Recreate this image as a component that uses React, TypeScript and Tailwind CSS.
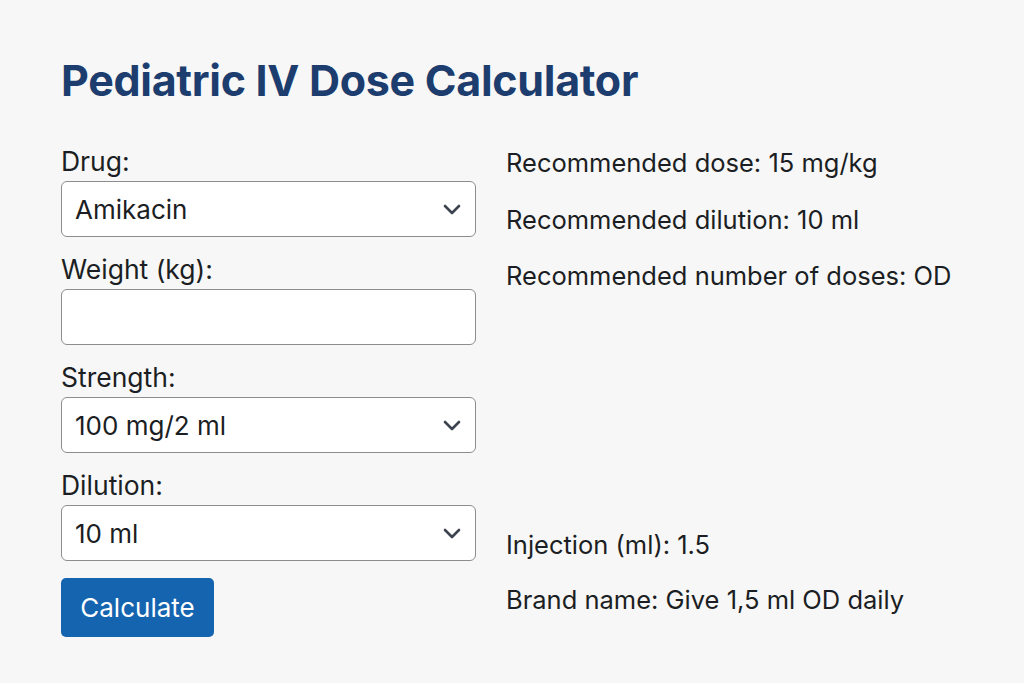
import React from "react";

function Chevron() {
  return (
    <svg width="18" height="11" viewBox="0 0 18 11" className="shrink-0" fill="none">
      <path d="M2 2l7 7 7-7" stroke="#3d4450" strokeWidth="2.6" strokeLinecap="round" strokeLinejoin="round" />
    </svg>
  );
}

function SelectBox({ value }: { value: string }) {
  return (
    <div className="h-[56px] bg-white border border-[#8d8d8d] rounded-[6px] flex items-center justify-between pl-[13px] pr-[14px]">
      <span className="text-[26px] text-[#1b1e23]">{value}</span>
      <Chevron />
    </div>
  );
}

function Label({ children }: { children: React.ReactNode }) {
  return <div className="h-[28px] leading-[28px] text-[26.5px] text-[#1b1e23] mb-[6px]">{children}</div>;
}

export default function App() {
  return (
    <div className="min-h-[683px] w-full bg-[#f7f7f7] font-['Inter',sans-serif] pl-[61px] pt-[54px]">
      <h1 className="text-[43px] leading-[52px] font-bold text-[#1c3d6e] tracking-[-0.3px]">Pediatric IV Dose Calculator</h1>
      <div className="flex gap-[30px] mt-[41px]">
        <div className="w-[415px] flex flex-col">
          <Label>Drug:</Label>
          <SelectBox value="Amikacin" />
          <div className="h-[18px]" />
          <Label>Weight (kg):</Label>
          <div className="h-[56px] bg-white border border-[#8d8d8d] rounded-[6px]" />
          <div className="h-[18px]" />
          <Label>Strength:</Label>
          <SelectBox value="100 mg/2 ml" />
          <div className="h-[18px]" />
          <Label>Dilution:</Label>
          <SelectBox value="10 ml" />
          <button className="mt-[17px] w-[153px] h-[59px] bg-[#1464b0] rounded-[5px] text-white text-[26px] flex items-center justify-center">Calculate</button>
        </div>
        <div className="flex flex-col text-[25.5px] leading-[28px] text-[#1b1e23] pt-[2px] pb-[23px]">
          <div>Recommended dose: 15 mg/kg</div>
          <div className="mt-[29px]">Recommended dilution: 10 ml</div>
          <div className="mt-[28px]">Recommended number of doses: OD</div>
          <div className="mt-auto">Injection (ml): 1.5</div>
          <div className="mt-[27px]">Brand name: Give 1,5 ml OD daily</div>
        </div>
      </div>
    </div>
  );
}
